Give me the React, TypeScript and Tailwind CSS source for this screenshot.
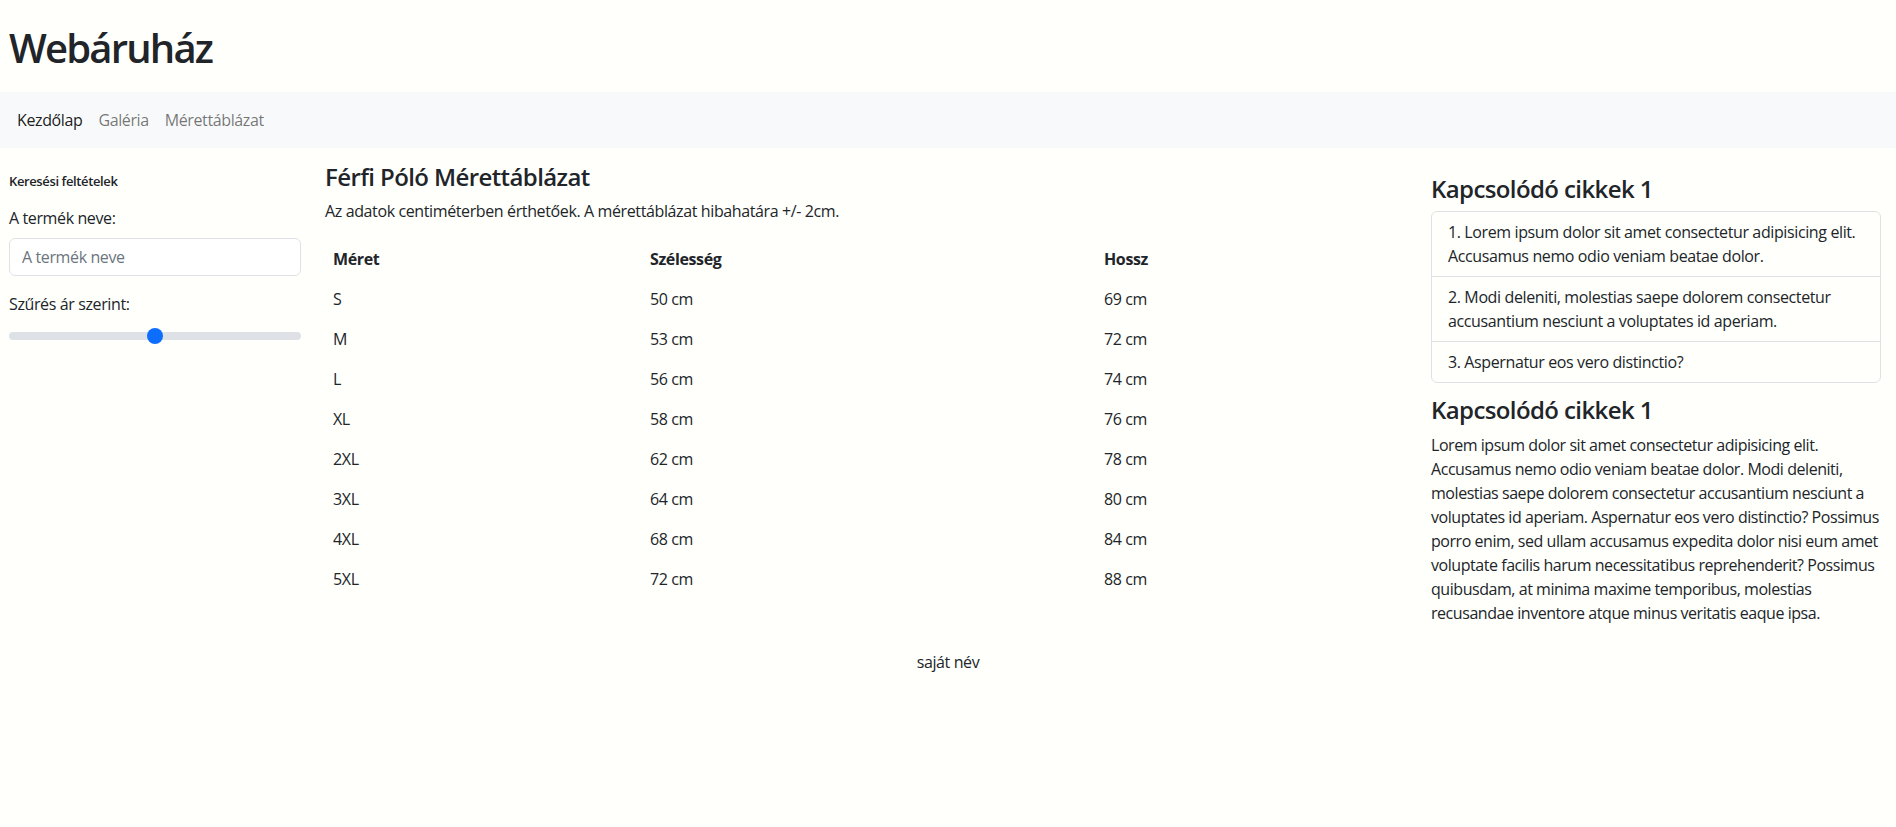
import React from "react";

const rows: [string, string, string][] = [
  ["S", "50 cm", "69 cm"],
  ["M", "53 cm", "72 cm"],
  ["L", "56 cm", "74 cm"],
  ["XL", "58 cm", "76 cm"],
  ["2XL", "62 cm", "78 cm"],
  ["3XL", "64 cm", "80 cm"],
  ["4XL", "68 cm", "84 cm"],
  ["5XL", "72 cm", "88 cm"],
];

const paraLines = [
  "Lorem ipsum dolor sit amet consectetur adipisicing elit.",
  "Accusamus nemo odio veniam beatae dolor. Modi deleniti,",
  "molestias saepe dolorem consectetur accusantium nesciunt a",
  "voluptates id aperiam. Aspernatur eos vero distinctio? Possimus",
  "porro enim, sed ullam accusamus expedita dolor nisi eum amet",
  "voluptate facilis harum necessitatibus reprehenderit? Possimus",
  "quibusdam, at minima maxime temporibus, molestias",
  "recusandae inventore atque minus veritatis eaque ipsa.",
];

export default function App() {
  return (
    <div
      className="min-h-[827px] bg-[#fffffc] text-[#212529] text-[16px] leading-[24px] tracking-[-0.38px]"
      style={{ fontFamily: '"Open Sans", "Noto Sans", sans-serif' }}
    >
      <header className="pt-[24px] pb-[20px] pl-[9px]">
        <h1 className="text-[40px] leading-[48px] font-semibold tracking-[-1.8px] m-0">Webáruház</h1>
      </header>
      <nav className="h-[56px] bg-[#f8f9fa] flex items-center pl-[9px]">
        <a className="px-[8px] text-[rgba(0,0,0,0.9)]">Kezdőlap</a>
        <a className="px-[8px] text-[rgba(0,0,0,0.55)]">Galéria</a>
        <a className="px-[8px] text-[rgba(0,0,0,0.55)]">Mérettáblázat</a>
      </nav>
      <main className="flex gap-[24px] pl-[9px] pr-[15px]">
        <aside className="w-[292px] shrink-0 pt-[23px]">
          <h6 className="text-[13px] leading-[20px] font-semibold mb-[15px]">Keresési feltételek</h6>
          <label className="block mb-[8px]">A termék neve:</label>
          <input
            className="block w-full h-[38px] px-[12px] border border-[#dee2e6] rounded-[6px] bg-white text-[16px] tracking-[-0.38px] placeholder:text-[#6c757d] outline-none"
            placeholder="A termék neve"
          />
          <label className="block mt-[16px] mb-[12px]">Szűrés ár szerint:</label>
          <div className="relative h-[16px] flex items-center">
            <div className="w-full h-[8px] rounded-full bg-[#dee2e6]" />
            <div className="absolute left-[138px] top-0 w-[16px] h-[16px] rounded-full bg-[#0d6efd]" />
          </div>
        </aside>
        <section className="w-[1082px] shrink-0 pt-[14px]">
          <h4 className="text-[24px] leading-[29px] font-semibold tracking-[-0.6px] mb-[8px]">Férfi Póló Mérettáblázat</h4>
          <p className="mb-[16px]">Az adatok centiméterben érthetőek. A mérettáblázat hibahatára +/- 2cm.</p>
          <table className="w-full border-collapse table-fixed">
            <thead>
              <tr>
                <th className="w-[317px] text-left font-bold px-[8px] py-[8px]">Méret</th>
                <th className="w-[454px] text-left font-bold px-[8px] py-[8px]">Szélesség</th>
                <th className="text-left font-bold px-[8px] py-[8px]">Hossz</th>
              </tr>
            </thead>
            <tbody>
              {rows.map((r) => (
                <tr key={r[0]}>
                  <td className="px-[8px] py-[8px]">{r[0]}</td>
                  <td className="px-[8px] py-[8px]">{r[1]}</td>
                  <td className="px-[8px] py-[8px]">{r[2]}</td>
                </tr>
              ))}
            </tbody>
          </table>
        </section>
        <aside className="w-[450px] shrink-0 pt-[26px]">
          <h4 className="text-[24px] leading-[29px] font-semibold tracking-[-0.6px] mb-[8px]">Kapcsolódó cikkek 1</h4>
          <ul className="border border-[#dee2e6] rounded-[6px]">
            <li className="px-[16px] py-[8px] border-b border-[#dee2e6]">
              1. Lorem ipsum dolor sit amet consectetur adipisicing elit. Accusamus nemo odio veniam beatae dolor.
            </li>
            <li className="px-[16px] py-[8px] border-b border-[#dee2e6]">
              2. Modi deleniti, molestias saepe dolorem consectetur accusantium nesciunt a voluptates id aperiam.
            </li>
            <li className="px-[16px] py-[8px]">3. Aspernatur eos vero distinctio?</li>
          </ul>
          <h4 className="text-[24px] leading-[29px] font-semibold tracking-[-0.6px] mt-[12px] mb-[9px]">Kapcsolódó cikkek 1</h4>
          <p className="whitespace-nowrap tracking-[-0.45px]">
            {paraLines.map((l, i) => (
              <React.Fragment key={i}>
                {l}
                {i < paraLines.length - 1 && <br />}
              </React.Fragment>
            ))}
          </p>
        </aside>
      </main>
      <footer className="text-center pt-[25px]">saját név</footer>
    </div>
  );
}
